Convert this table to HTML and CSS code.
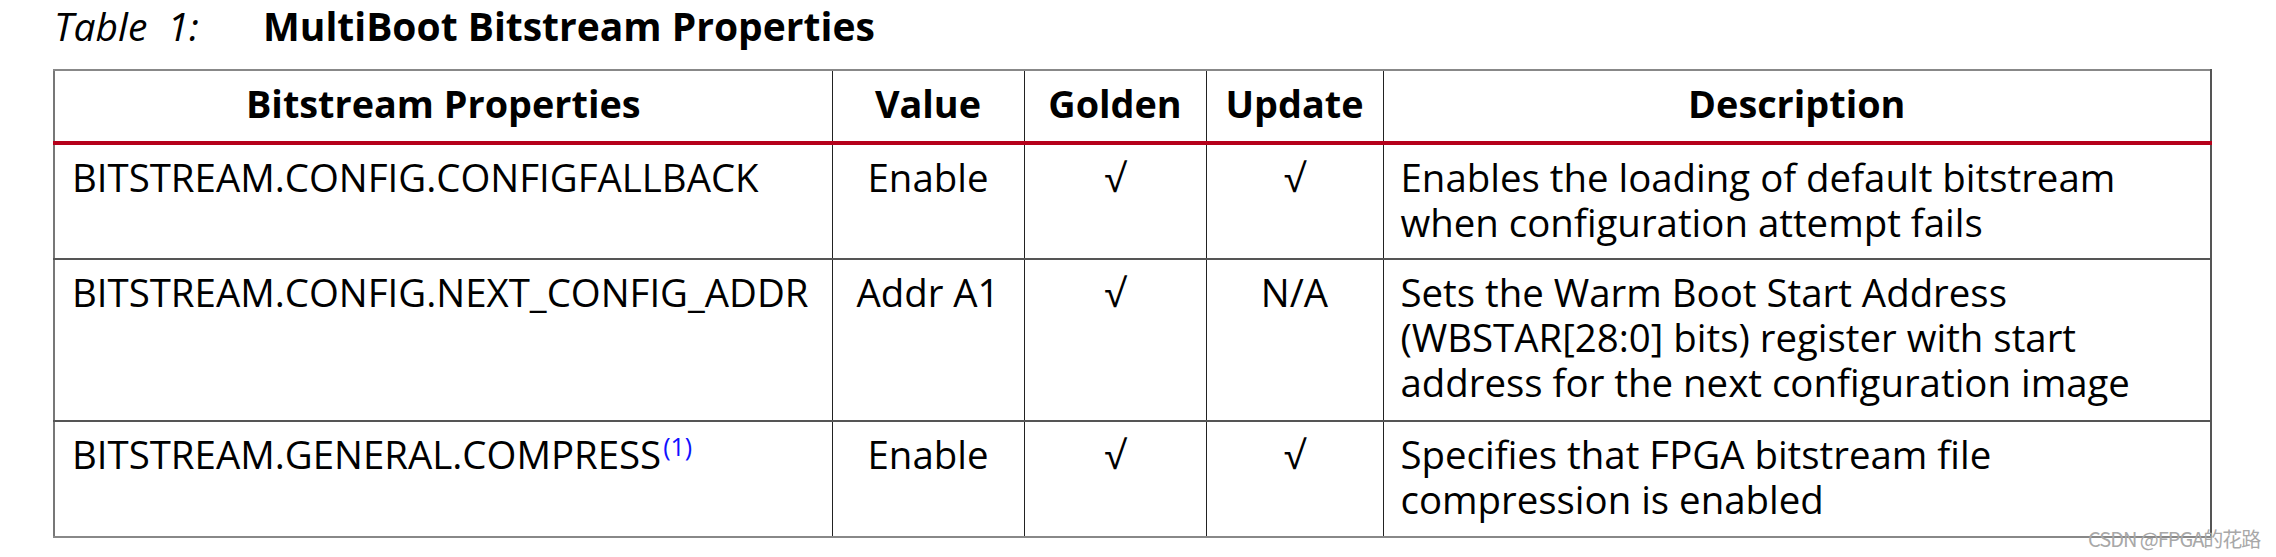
FILE: index.html
```html
<!DOCTYPE html>
<html>
<head>
<meta charset="utf-8">
<link rel="stylesheet" href="styles.css">
</head>
<body>
<div class="page">
  <div class="caption"><span class="cap-label">Table&nbsp; 1:</span><span class="cap-title">MultiBoot Bitstream Properties</span></div>
  <table class="props">
    <colgroup>
      <col class="c1"><col class="c2"><col class="c3"><col class="c4"><col class="c5">
    </colgroup>
    <thead>
      <tr>
        <th>Bitstream Properties</th>
        <th>Value</th>
        <th>Golden</th>
        <th>Update</th>
        <th>Description</th>
      </tr>
    </thead>
    <tbody>
      <tr class="r1">
        <td>BITSTREAM.CONFIG.CONFIGFALLBACK</td>
        <td class="ctr">Enable</td>
        <td class="ctr">√</td>
        <td class="ctr">√</td>
        <td>Enables the loading of default bitstream when configuration attempt fails</td>
      </tr>
      <tr class="r2">
        <td>BITSTREAM.CONFIG.NEXT_CONFIG_ADDR</td>
        <td class="ctr">Addr A1</td>
        <td class="ctr">√</td>
        <td class="ctr">N/A</td>
        <td>Sets the Warm Boot Start Address (WBSTAR[28:0] bits) register with start address for the next configuration image</td>
      </tr>
      <tr class="r3">
        <td>BITSTREAM.GENERAL.COMPRESS<sup class="note">(1)</sup></td>
        <td class="ctr">Enable</td>
        <td class="ctr">√</td>
        <td class="ctr">√</td>
        <td>Specifies that FPGA bitstream file compression is enabled</td>
      </tr>
    </tbody>
  </table>
  <div class="watermark">CSDN @FPGA的花路</div>
</div>
</body>
</html>
```

FILE: styles.css
```css
html, body {
  margin: 0;
  padding: 0;
  background: #ffffff;
}

.page {
  position: relative;
  width: 2276px;
  height: 557px;
  padding-left: 53px;
  box-sizing: border-box;
  font-family: "Open Sans", "Noto Sans", "Noto Sans CJK SC", sans-serif;
  color: #000;
}

.caption {
  height: 69px;
  padding-left: 1px;
  display: flex;
  align-items: flex-start;
  font-size: 39px;
  line-height: 52px;
}

.cap-label {
  font-style: italic;
  font-weight: 400;
  width: 209px;
}

.cap-title {
  font-weight: 700;
}

.props {
  border-collapse: collapse;
  table-layout: fixed;
  width: 2157px;
  font-size: 38.4px;
  line-height: 45px;
}

.c1 { width: 778px; }
.c2 { width: 192px; }
.c3 { width: 182px; }
.c4 { width: 177px; }
.c5 { width: 828px; }

.props th,
.props td {
  border-left: 1px solid #222;
  border-right: 1px solid #222;
  vertical-align: top;
}

.props th:first-child,
.props td:first-child {
  border-left: 2px solid #777;
}

.props th:last-child,
.props td:last-child {
  border-right: 2px solid #555;
}

.props th {
  height: 73px;
  padding: 0 0 6px 0;
  box-sizing: border-box;
  font-size: 37.8px;
  font-weight: 700;
  text-align: center;
  vertical-align: middle;
  border-top: 2px solid #888;
  border-bottom: 4px solid #b5001a;
}

.props td {
  padding: 10px 12px 0 17px;
  font-weight: 400;
  text-align: left;
  border-bottom: 2px solid #555;
}

.props td.ctr {
  text-align: center;
  padding-left: 6px;
  padding-right: 6px;
}

.props tr.r1 td { height: 103px; }
.props tr.r2 td { height: 150px; }
.props tr.r3 td { height: 104px; }

.props tr.r3 td { border-bottom: 2px solid #888; }

.note {
  color: #1010ff;
  font-size: 25px;
  line-height: 0;
  vertical-align: 13px;
  margin-left: 2px;
}

.watermark {
  position: absolute;
  left: 2088px;
  top: 526px;
  font-family: "Noto Sans CJK SC", "Noto Sans", sans-serif;
  font-size: 20px;
  color: #a8a8a8;
  line-height: 26px;
  letter-spacing: -1px;
}
```
